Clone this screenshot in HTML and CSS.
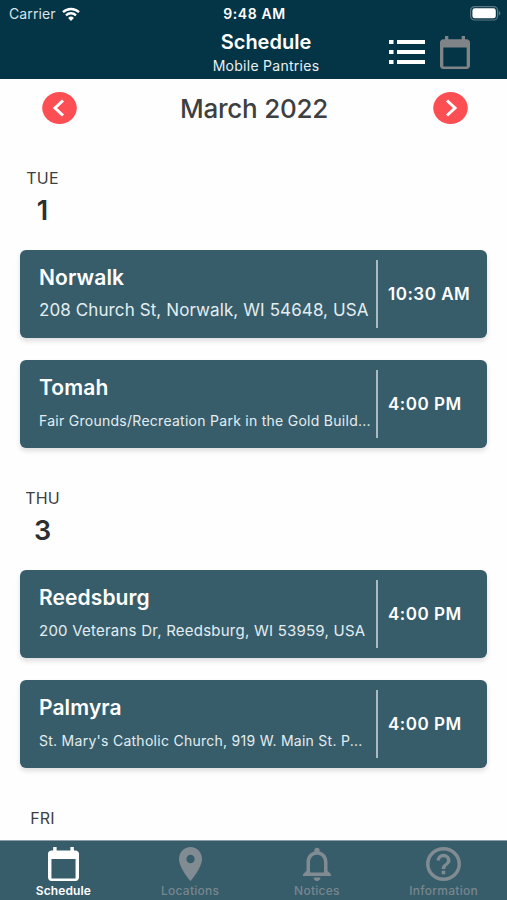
FILE: index.html
```html
<!DOCTYPE html>
<html lang="en">
<head>
    <meta charset="UTF-8">
    <meta name="viewport" content="width=device-width, initial-scale=1.0">
    <title>Mobile Pantries Schedule</title>
    <link rel="stylesheet" href="styles.css">
</head>
<body>
    <div class="app">
        <header class="top">
            <div class="status-bar">
                <div class="carrier">
                    <span>Carrier</span>
                    <svg class="wifi" viewBox="0 0 18 14" preserveAspectRatio="none">
                        <path d="M1 5.2a11.5 11.5 0 0 1 16 0M4 8.3a7.2 7.2 0 0 1 10 0" fill="none" stroke="#fff" stroke-width="2.4"/>
                        <path d="M9 14 6.1 10.9a4.3 4.3 0 0 1 5.8 0z" fill="#fff"/>
                    </svg>
                </div>
                <div class="clock">9:48 AM</div>
                <svg class="battery" viewBox="0 0 31 15">
                    <rect x=".6" y=".6" width="27" height="13.4" rx="4" fill="none" stroke="#5d7682" stroke-width="1.2"/>
                    <rect x="2.4" y="2.3" width="23.4" height="10" rx="2.4" fill="#fff"/>
                    <path d="M28.8 5v4.6q1.5-.5 1.5-2.3T28.8 5z" fill="#5d7682"/>
                </svg>
            </div>
            <div class="nav-bar">
                <div class="heading">
                    <h1>Schedule</h1>
                    <p>Mobile Pantries</p>
                </div>
                <div class="views">
                    <svg class="list-icon" viewBox="0 0 36 26" fill="#fff">
                        <path d="M0 1h4.5v4H0zM0 11h4.5v4H0zM0 21h4.5v4H0zM8 1h28v4H8zM8 11h28v4H8zM8 21h28v4H8z"/>
                    </svg>
                    <svg class="calendar-icon" viewBox="3 1 18 20" preserveAspectRatio="none" fill="#808487">
                        <path d="M19 3h-1V1h-2v2H8V1H6v2H5c-1.1 0-2 .9-2 2v14c0 1.1.9 2 2 2h14c1.1 0 2-.9 2-2V5c0-1.1-.9-2-2-2zm0 16.5H5V8h14z"/>
                    </svg>
                </div>
            </div>
        </header>

        <main class="schedule">
            <div class="month">
                <svg class="arrow" viewBox="0 0 35 32">
                    <ellipse cx="17.5" cy="16" rx="17.3" ry="16" fill="#fd4f53"/>
                    <path d="M21 8.5 13 16l8 7.5" fill="none" stroke="#fff" stroke-width="3"/>
                </svg>
                <h2>March 2022</h2>
                <svg class="arrow" viewBox="0 0 35 32">
                    <ellipse cx="17.5" cy="16" rx="17.3" ry="16" fill="#fd4f53"/>
                    <path d="M14 8.5l8 7.5-8 7.5" fill="none" stroke="#fff" stroke-width="3"/>
                </svg>
            </div>

            <section class="day">
                <div class="date">
                    <div class="weekday">TUE</div>
                    <div class="number">1</div>
                </div>
                <div class="card">
                    <div class="place">
                        <h3>Norwalk</h3>
                        <p class="large">208 Church St, Norwalk, WI 54648, USA</p>
                    </div>
                    <div class="time">10:30 AM</div>
                </div>
                <div class="card">
                    <div class="place">
                        <h3>Tomah</h3>
                        <p>Fair Grounds/Recreation Park in the Gold Build...</p>
                    </div>
                    <div class="time">4:00 PM</div>
                </div>
            </section>

            <section class="day">
                <div class="date">
                    <div class="weekday">THU</div>
                    <div class="number">3</div>
                </div>
                <div class="card">
                    <div class="place">
                        <h3>Reedsburg</h3>
                        <p class="medium">200 Veterans Dr, Reedsburg, WI 53959, USA</p>
                    </div>
                    <div class="time">4:00 PM</div>
                </div>
                <div class="card">
                    <div class="place">
                        <h3>Palmyra</h3>
                        <p>St. Mary's Catholic Church, 919 W. Main St. P...</p>
                    </div>
                    <div class="time">4:00 PM</div>
                </div>
            </section>

            <section class="day">
                <div class="date">
                    <div class="weekday">FRI</div>
                </div>
            </section>
        </main>

        <nav class="tabs">
            <div class="tab active">
                <svg class="tab-calendar" viewBox="3 1 18 20" preserveAspectRatio="none">
                    <path d="M19 3h-1V1h-2v2H8V1H6v2H5c-1.1 0-2 .9-2 2v14c0 1.1.9 2 2 2h14c1.1 0 2-.9 2-2V5c0-1.1-.9-2-2-2zm0 16.5H5V8h14z"/>
                </svg>
                <span>Schedule</span>
            </div>
            <div class="tab">
                <svg class="tab-pin" viewBox="5 2 14 20" preserveAspectRatio="none">
                    <path d="M12 2C8.13 2 5 5.13 5 9c0 5.25 7 13 7 13s7-7.75 7-13c0-3.87-3.13-7-7-7zm0 9.5a2.5 2.5 0 1 1 0-5 2.5 2.5 0 0 1 0 5z"/>
                </svg>
                <span>Locations</span>
            </div>
            <div class="tab">
                <svg class="tab-bell" viewBox="4 2 16 20" preserveAspectRatio="none">
                    <path d="M12 22c1.1 0 2-.9 2-2h-4c0 1.1.9 2 2 2zm6-6v-5c0-3.07-1.63-5.64-4.5-6.32V4a1.5 1.5 0 0 0-3 0v.68C7.64 5.36 6 7.92 6 11v5l-2 2v1h16v-1zm-2 1H8v-6c0-2.48 1.51-4.5 4-4.5s4 2.02 4 4.5z"/>
                </svg>
                <span>Notices</span>
            </div>
            <div class="tab">
                <svg class="tab-help" viewBox="2 2 20 20" preserveAspectRatio="none">
                    <path d="M11 18h2v-2h-2zm1-16a10 10 0 1 0 0 20 10 10 0 0 0 0-20zm0 18a8 8 0 1 1 0-16 8 8 0 0 1 0 16zm0-14a4 4 0 0 0-4 4h2a2 2 0 1 1 4 0c0 2-3 1.75-3 5h2c0-2.25 3-2.5 3-5a4 4 0 0 0-4-4z"/>
                </svg>
                <span>Information</span>
            </div>
        </nav>
    </div>
</body>
</html>
```

FILE: styles.css
```css
* {
    box-sizing: border-box;
}

body {
    margin: 0;
    font-family: Inter, "Liberation Sans", sans-serif;
    background-color: #fefefe;
    color: #3d3f40;
}

h1, h2, h3, p {
    margin: 0;
    white-space: nowrap;
}

svg {
    display: block;
    flex: none;
}

.app {
    display: flex;
    flex-direction: column;
    height: 900px;
    overflow: hidden;
}

.top {
    flex: none;
    height: 79px;
    background-color: #043546;
    color: #fff;
}

.status-bar {
    display: grid;
    grid-template-columns: 1fr auto 1fr;
    align-items: center;
    height: 27px;
    padding: 0 6px 0 9px;
    font-size: 14px;
}

.carrier {
    display: flex;
    align-items: center;
    gap: 6px;
    color: #d9e3e8;
    letter-spacing: 0.1px;
}

.wifi {
    width: 18px;
    height: 14px;
}

.clock {
    font-weight: 600;
    letter-spacing: 0.6px;
    margin-right: 1px;
}

.battery {
    width: 31px;
    height: 15px;
    justify-self: end;
}

.nav-bar {
    display: grid;
    grid-template-columns: 1fr auto 1fr;
    height: 52px;
    padding: 1px 37px 0 62px;
}

.heading {
    grid-column: 2;
    text-align: center;
}

.heading h1 {
    font-size: 20px;
    line-height: 28px;
    font-weight: 600;
}

.heading p {
    font-size: 14px;
    line-height: 20px;
    letter-spacing: 0.27px;
    color: #e9eff2;
}

.views {
    display: flex;
    justify-content: flex-end;
    align-items: center;
    gap: 15px;
    height: 48px;
}

.list-icon {
    width: 36px;
    height: 26px;
}

.calendar-icon {
    width: 30px;
    height: 33px;
}

.schedule {
    flex: 1;
    min-height: 0;
    overflow: hidden;
}

.month {
    display: flex;
    justify-content: space-between;
    align-items: center;
    height: 59px;
    padding: 0 39px 1px 42px;
}

.month h2 {
    font-size: 26px;
    line-height: 30px;
    font-weight: 500;
    letter-spacing: -0.25px;
    margin-right: 2px;
    padding-top: 1px;
}

.arrow {
    width: 35px;
    height: 32px;
}

.day {
    height: 320px;
    padding: 28px 20px 0;
}

.date {
    width: 45px;
    height: 84px;
    text-align: center;
}

.weekday {
    font-size: 16px;
    line-height: 24px;
    letter-spacing: 0.2px;
}

.number {
    font-size: 27px;
    line-height: 42px;
    font-weight: 600;
    color: #2d2f30;
}

.card {
    display: flex;
    align-items: center;
    height: 88px;
    margin-bottom: 22px;
    border-radius: 6px;
    background-color: #375d6b;
    color: #fff;
    box-shadow: 0 3px 5px rgba(0, 0, 0, 0.13);
}

.place {
    width: 358px;
    height: 68px;
    padding-left: 19px;
    border-right: 2px solid #a9bac3;
}

.place h3 {
    font-size: 21px;
    line-height: 36px;
    font-weight: 600;
    letter-spacing: 0.1px;
}

.place p {
    font-size: 14px;
    line-height: 30px;
    letter-spacing: 0.27px;
    color: #e3edf1;
}

.place .medium {
    font-size: 15px;
    letter-spacing: 0.23px;
}

.place .large {
    font-size: 17px;
    line-height: 28px;
    letter-spacing: 0.1px;
}

.time {
    padding-left: 10px;
    font-size: 17px;
    font-weight: 600;
    letter-spacing: 0.5px;
    line-height: 24px;
}

.tabs {
    display: grid;
    grid-template-columns: repeat(4, 1fr);
    flex: none;
    height: 60px;
    background-color: #375d6b;
    border-top: 1px solid #8c9fa8;
}

.tab {
    display: flex;
    flex-direction: column;
    align-items: center;
    padding-top: 6px;
    fill: #818b92;
    color: #77868e;
    font-size: 12px;
    font-weight: 500;
    letter-spacing: 0.25px;
}

.tab span {
    line-height: 16px;
    margin-top: 2px;
}

.active {
    fill: #fff;
    color: #fff;
    font-weight: 600;
    letter-spacing: 0.1px;
}

.tab-calendar {
    width: 31px;
    height: 34px;
}

.tab-pin {
    width: 23px;
    height: 34px;
}

.tab-bell {
    width: 28px;
    height: 34px;
}

.tab-help {
    width: 35px;
    height: 34px;
}
```
